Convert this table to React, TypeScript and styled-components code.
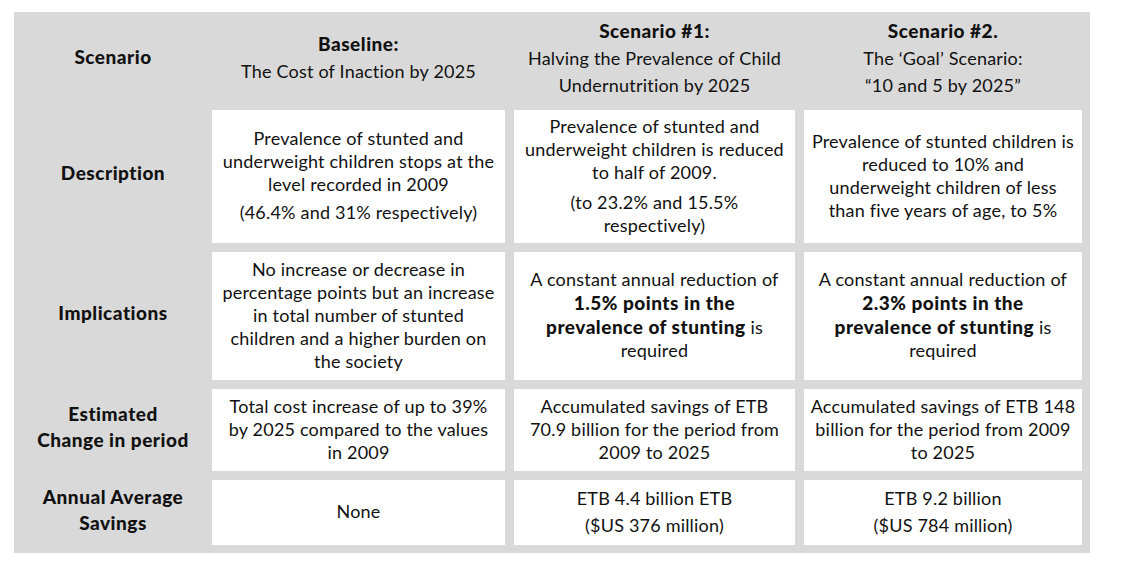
import React from "react";
import styled, { createGlobalStyle } from "styled-components";

const GlobalStyle = createGlobalStyle`
  html, body { margin: 0; padding: 0; background: #ffffff; }
  body { font-family: "Lato", "Open Sans", sans-serif; color: #111111; }
`;

const Page = styled.div`
  padding: 12px 0 0 14px;
`;

const Table = styled.div`
  width: 1076px;
  box-sizing: border-box;
  background: #d9d9d9;
  display: grid;
  grid-template-columns: 189px 293px 281px 278px;
  grid-template-rows: 89px 133px 128px 82px 65px;
  column-gap: 9px;
  row-gap: 9px;
  padding: 0 8px 8px 0;
`;

const Label = styled.div<{ $raise?: number }>`
  display: flex;
  align-items: center;
  justify-content: center;
  flex-direction: column;
  padding-left: 9px;
  padding-bottom: ${(p) => p.$raise ?? 0}px;
  font-weight: 900;
  font-size: 19px;
  letter-spacing: 0.5px;
  line-height: 26px;
  text-align: center;
  white-space: nowrap;
`;

const Head = styled.div`
  display: flex;
  flex-direction: column;
  align-items: center;
  justify-content: center;
  text-align: center;
  font-size: 18px;
  letter-spacing: 0.2px;
  line-height: 27px;
  padding-top: 2px;
  white-space: nowrap;
`;

const Cell = styled.div`
  background: #ffffff;
  display: flex;
  flex-direction: column;
  align-items: center;
  justify-content: center;
  text-align: center;
  font-size: 18px;
  letter-spacing: 0.2px;
  line-height: 23px;
  padding: 0 4px 2px;
  white-space: nowrap;
`;

const Para = styled.div<{ $gap?: number }>`
  margin-top: ${(p) => p.$gap ?? 0}px;
`;

const Line = styled.span`
  display: block;
`;

const B = styled.b`
  font-weight: 900;
  font-size: 19px;
  letter-spacing: 0.5px;
`;

export default function App() {
  return (
    <>
      <GlobalStyle />
      <Page>
        <Table>
          <Label>Scenario</Label>
          <Head>
            <Line>
              <B>Baseline:</B>
            </Line>
            <Line>The Cost of Inaction by 2025</Line>
          </Head>
          <Head>
            <Line>
              <B>Scenario #1:</B>
            </Line>
            <Line>Halving the Prevalence of Child</Line>
            <Line>Undernutrition by 2025</Line>
          </Head>
          <Head>
            <Line>
              <B>Scenario #2.</B>
            </Line>
            <Line>The ‘Goal’ Scenario:</Line>
            <Line>“10 and 5 by 2025”</Line>
          </Head>

          <Label $raise={7}>Description</Label>
          <Cell>
            <Para>
              <Line>Prevalence of stunted and</Line>
              <Line>underweight children stops at the</Line>
              <Line>level recorded in 2009</Line>
            </Para>
            <Para $gap={5}>
              <Line>(46.4% and 31% respectively)</Line>
            </Para>
          </Cell>
          <Cell>
            <Para>
              <Line>Prevalence of stunted and</Line>
              <Line>underweight children is reduced</Line>
              <Line>to half of 2009.</Line>
            </Para>
            <Para $gap={7}>
              <Line>(to 23.2% and 15.5%</Line>
              <Line>respectively)</Line>
            </Para>
          </Cell>
          <Cell>
            <Para>
              <Line>Prevalence of stunted children is</Line>
              <Line>reduced to 10% and</Line>
              <Line>underweight children of less</Line>
              <Line>than five years of age, to 5%</Line>
            </Para>
          </Cell>

          <Label $raise={7}>Implications</Label>
          <Cell>
            <Para>
              <Line>No increase or decrease in</Line>
              <Line>percentage points but an increase</Line>
              <Line>in total number of stunted</Line>
              <Line>children and a higher burden on</Line>
              <Line>the society</Line>
            </Para>
          </Cell>
          <Cell>
            <Para>
              <Line>A constant annual reduction of</Line>
              <Line>
                <B>1.5% points in the</B>
              </Line>
              <Line>
                <B>prevalence of stunting</B> is
              </Line>
              <Line>required</Line>
            </Para>
          </Cell>
          <Cell>
            <Para>
              <Line>A constant annual reduction of</Line>
              <Line>
                <B>2.3% points in the</B>
              </Line>
              <Line>
                <B>prevalence of stunting</B> is
              </Line>
              <Line>required</Line>
            </Para>
          </Cell>

          <Label $raise={6}>
            <Line>Estimated</Line>
            <Line>Change in period</Line>
          </Label>
          <Cell>
            <Para>
              <Line>Total cost increase of up to 39%</Line>
              <Line>by 2025 compared to the values</Line>
              <Line>in 2009</Line>
            </Para>
          </Cell>
          <Cell>
            <Para>
              <Line>Accumulated savings of ETB</Line>
              <Line>70.9 billion for the period from</Line>
              <Line>2009 to 2025</Line>
            </Para>
          </Cell>
          <Cell>
            <Para>
              <Line>Accumulated savings of ETB 148</Line>
              <Line>billion for the period from 2009</Line>
              <Line>to 2025</Line>
            </Para>
          </Cell>

          <Label $raise={6}>
            <Line>Annual Average</Line>
            <Line>Savings</Line>
          </Label>
          <Cell>
            <Para>
              <Line>None</Line>
            </Para>
          </Cell>
          <Cell>
            <Para>
              <Line>ETB 4.4 billion ETB</Line>
            </Para>
            <Para $gap={4}>
              <Line>($US 376 million)</Line>
            </Para>
          </Cell>
          <Cell>
            <Para>
              <Line>ETB 9.2 billion</Line>
            </Para>
            <Para $gap={4}>
              <Line>($US 784 million)</Line>
            </Para>
          </Cell>
        </Table>
      </Page>
    </>
  );
}
